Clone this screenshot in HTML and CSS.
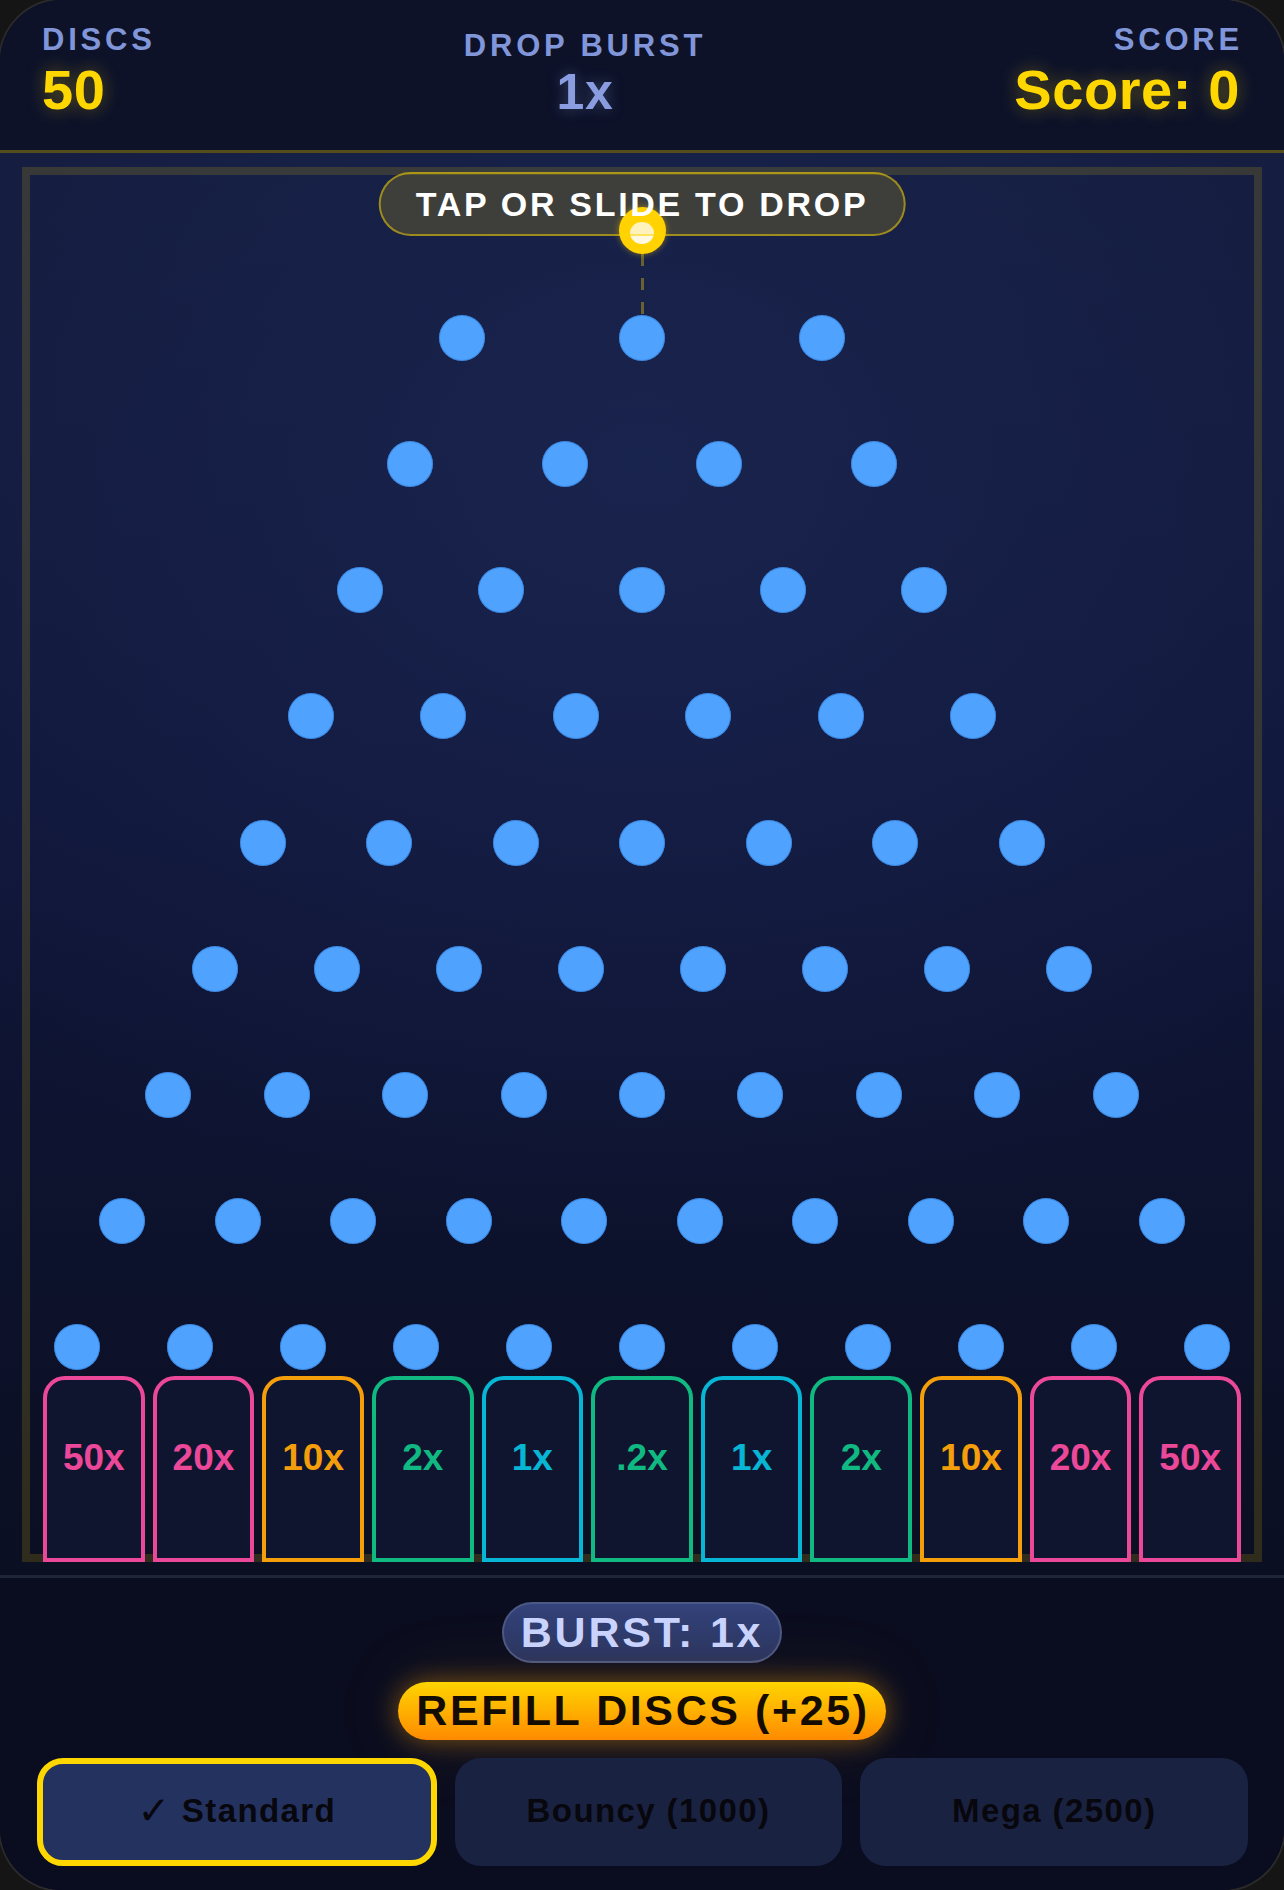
FILE: index.html
```html
<!DOCTYPE html>
<html lang="en">
<head>
<meta charset="utf-8">
<title>Plinko Drop Burst</title>
<link rel="stylesheet" href="styles.css">
</head>
<body>
<div class="app">
  <header class="hud">
    <div class="stat">
      <div class="label">DISCS</div>
      <div class="value gold">50</div>
    </div>
    <div class="stat center">
      <div class="label">DROP BURST</div>
      <div class="value muted">1x</div>
    </div>
    <div class="stat right">
      <div class="label">SCORE</div>
      <div class="value gold">Score: 0</div>
    </div>
  </header>

  <main class="board">
    <div class="frame">
      <div class="hint">TAP OR SLIDE TO DROP</div>
      <div class="dropper">
        <div class="disc"><span class="shine"></span></div>
        <div class="guide"></div>
      </div>
      <div class="pegs">
        <div class="row r1"><i class="peg"></i><i class="peg"></i><i class="peg"></i></div>
        <div class="row r2"><i class="peg"></i><i class="peg"></i><i class="peg"></i><i class="peg"></i></div>
        <div class="row r3"><i class="peg"></i><i class="peg"></i><i class="peg"></i><i class="peg"></i><i class="peg"></i></div>
        <div class="row r4"><i class="peg"></i><i class="peg"></i><i class="peg"></i><i class="peg"></i><i class="peg"></i><i class="peg"></i></div>
        <div class="row r5"><i class="peg"></i><i class="peg"></i><i class="peg"></i><i class="peg"></i><i class="peg"></i><i class="peg"></i><i class="peg"></i></div>
        <div class="row r6"><i class="peg"></i><i class="peg"></i><i class="peg"></i><i class="peg"></i><i class="peg"></i><i class="peg"></i><i class="peg"></i><i class="peg"></i></div>
        <div class="row r7"><i class="peg"></i><i class="peg"></i><i class="peg"></i><i class="peg"></i><i class="peg"></i><i class="peg"></i><i class="peg"></i><i class="peg"></i><i class="peg"></i></div>
        <div class="row r8"><i class="peg"></i><i class="peg"></i><i class="peg"></i><i class="peg"></i><i class="peg"></i><i class="peg"></i><i class="peg"></i><i class="peg"></i><i class="peg"></i><i class="peg"></i></div>
        <div class="row r9"><i class="peg"></i><i class="peg"></i><i class="peg"></i><i class="peg"></i><i class="peg"></i><i class="peg"></i><i class="peg"></i><i class="peg"></i><i class="peg"></i><i class="peg"></i><i class="peg"></i></div>
      </div>
      <div class="bins">
        <div class="bin pink">50x</div>
        <div class="bin pink">20x</div>
        <div class="bin amber">10x</div>
        <div class="bin green">2x</div>
        <div class="bin cyan">1x</div>
        <div class="bin green">.2x</div>
        <div class="bin cyan">1x</div>
        <div class="bin green">2x</div>
        <div class="bin amber">10x</div>
        <div class="bin pink">20x</div>
        <div class="bin pink">50x</div>
      </div>
    </div>
  </main>

  <footer class="controls">
    <div class="burst">BURST: 1x</div>
    <button class="refill">REFILL DISCS (+25)</button>
    <div class="modes">
      <button class="mode active"><span class="check">✓</span> Standard</button>
      <button class="mode">Bouncy (1000)</button>
      <button class="mode">Mega (2500)</button>
    </div>
  </footer>
</div>
</body>
</html>
```

FILE: styles.css
```css
html, body {
  margin: 0;
  padding: 0;
  background: #151515;
}

body {
  font-family: "Liberation Sans", Arial, "DejaVu Sans", sans-serif;
  overflow: hidden;
}

.app {
  width: 1284px;
  height: 1890px;
  border-radius: 62px;
  overflow: hidden;
  display: flex;
  flex-direction: column;
  background: #0a0d1f;
  box-shadow: 0 0 0 2px #2a2a2a;
}

/* ---------- HUD ---------- */
.hud {
  height: 153px;
  box-sizing: border-box;
  flex: none;
  display: flex;
  justify-content: space-between;
  align-items: flex-start;
  padding: 23px 44px 0 42px;
  background: #0d1229;
  border-bottom: 3px solid rgba(255, 215, 0, 0.3);
}

.stat {
  display: flex;
  flex-direction: column;
  align-items: flex-start;
}

.stat.center {
  align-items: center;
  margin-top: 6px;
}

.stat.right {
  align-items: flex-end;
}

.label {
  font-size: 31px;
  line-height: 1.12;
  font-weight: 700;
  letter-spacing: 3.8px;
  color: #8196d8;
}

.stat.right .label {
  margin-right: -3px;
}

.value {
  font-weight: 700;
  font-size: 56px;
  line-height: 1.15;
  letter-spacing: 0.6px;
}

.value.gold {
  color: #ffd700;
  text-shadow: 0 0 18px rgba(255, 215, 0, 0.35);
}

.value.muted {
  font-size: 50px;
  color: #8a9de0;
  text-shadow: 0 0 14px rgba(138, 157, 224, 0.35);
}

/* ---------- Board ---------- */
.board {
  height: 1422px;
  box-sizing: border-box;
  flex: none;
  padding: 14px 22px 13px;
  background:
    radial-gradient(ellipse 75% 55% at 50% 22%, rgba(26, 37, 80, 0.85) 0%, rgba(26, 37, 80, 0) 100%),
    linear-gradient(to bottom, #141c3d 0%, #10163a 45%, #0b0f22 100%);
}

.frame {
  position: relative;
  border: 8px solid rgba(255, 215, 0, 0.15);
  display: flex;
  flex-direction: column;
  align-items: stretch;
}

.hint {
  position: absolute;
  top: -3px;
  left: 50%;
  transform: translateX(-50%);
  z-index: 3;
  padding: 10px 35px;
  border: 2px solid rgba(255, 215, 0, 0.5);
  border-radius: 40px;
  background: rgba(255, 215, 0, 0.17);
  color: #ffffff;
  font-size: 34px;
  line-height: 40px;
  font-weight: 700;
  letter-spacing: 2.7px;
  white-space: nowrap;
}

.dropper {
  display: flex;
  flex-direction: column;
  align-items: center;
  padding-top: 32px;
}

.disc {
  position: relative;
  z-index: 1;
  width: 47px;
  height: 47px;
  border-radius: 50%;
  background: #ffd200;
  box-shadow: 0 0 6px rgba(255, 210, 0, 0.45);
  display: flex;
  align-items: center;
  justify-content: center;
}

.shine {
  width: 24px;
  height: 22px;
  margin-top: 4px;
  border-radius: 50%;
  background: #fff8e2;
}

.guide {
  width: 3px;
  height: 61px;
  background: repeating-linear-gradient(to bottom, rgba(255, 215, 0, 0.35) 0 12px, transparent 12px 24px);
}

.pegs {
  display: flex;
  flex-direction: column;
  gap: 80.15px;
}

.row {
  display: flex;
  justify-content: center;
}

.peg {
  display: block;
  width: 46px;
  height: 46px;
  border-radius: 50%;
  background: #4fa3ff;
  box-shadow: inset 0 0 0 1px rgba(40, 110, 200, 0.5);
}

.r1 { gap: 134.2px; }
.r2 { gap: 108.5px; }
.r3 { gap: 95px; }
.r4 { gap: 86.6px; }
.r5 { gap: 80.5px; }
.r6 { gap: 75.9px; }
.r7 { gap: 72.4px; }
.r8 { gap: 69.5px; }
.r9 { gap: 67px; }

.bins {
  display: flex;
  gap: 8px;
  padding: 0 13px;
  margin-top: 6px;
  margin-bottom: -8px;
}

.bin {
  flex: 1 1 0;
  height: 186px;
  box-sizing: border-box;
  border: 4px solid currentColor;
  border-radius: 22px 22px 0 0;
  background: #10152f;
  padding-top: 57px;
  text-align: center;
  font-size: 37px;
  line-height: 1.15;
  font-weight: 700;
}

.bin.pink { color: #ec4899; }
.bin.amber { color: #f59e0b; }
.bin.green { color: #10b981; }
.bin.cyan { color: #06b6d4; }

/* ---------- Controls ---------- */
.controls {
  flex: 1;
  display: flex;
  flex-direction: column;
  align-items: center;
  padding-top: 24px;
  border-top: 3px solid #1f2538;
  background: #0a0d1f;
}

.burst {
  padding: 4px 17px;
  border: 2px solid #4c5885;
  border-radius: 40px;
  background: linear-gradient(to bottom, #34437b, #27335f);
  color: #c9d4ff;
  font-size: 43px;
  font-weight: 700;
  letter-spacing: 2.8px;
  line-height: 1.15;
  margin-bottom: 19px;
}

.refill {
  font-family: inherit;
  border: none;
  padding: 4px 16px 4px 18px;
  border-radius: 40px;
  background: linear-gradient(to bottom, #ffd400 0%, #ffb000 50%, #ff8a00 100%);
  box-shadow: 0 0 26px rgba(255, 160, 0, 0.45), 0 0 80px rgba(255, 160, 0, 0.1);
  color: #140c00;
  font-size: 43px;
  font-weight: 700;
  letter-spacing: 2.6px;
  line-height: 1.15;
  margin-bottom: 18px;
}

.modes {
  align-self: stretch;
  display: flex;
  gap: 18px;
  padding: 0 36px 0 37px;
}

.mode {
  flex: 1 1 0;
  box-sizing: content-box;
  height: 106px;
  padding: 0 0 2px;
  border: none;
  border-radius: 26px;
  background: #1a2241;
  color: #07070d;
  font-family: "Liberation Sans", Arial, "DejaVu Sans", sans-serif;
  font-size: 33px;
  font-weight: 700;
  letter-spacing: 1.4px;
  line-height: 1.15;
}

.mode.active {
  height: 96px;
  padding: 0;
  border: 6px solid #ffd700;
  background: #243260;
}

.check {
  font-family: "DejaVu Sans", sans-serif;
  font-weight: 400;
  font-size: 39px;
  letter-spacing: 0;
  margin-right: 1px;
  vertical-align: -2px;
}
```
